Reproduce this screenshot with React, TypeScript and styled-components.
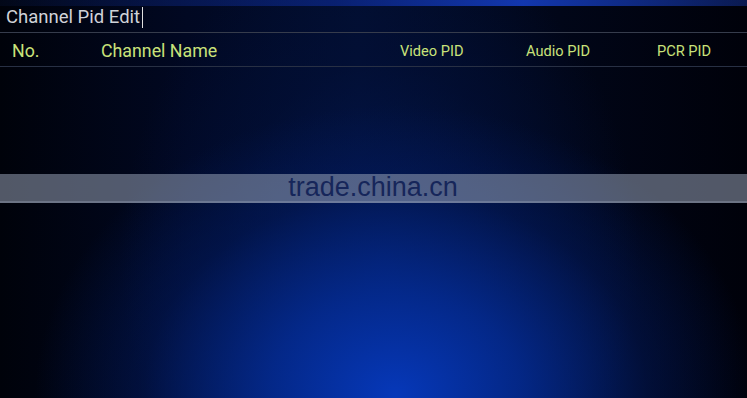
import * as React from 'react';
import styled, { createGlobalStyle } from 'styled-components';

const GlobalStyle = createGlobalStyle`
  html, body {
    margin: 0;
    padding: 0;
    background: #01040c;
  }
  body {
    font-family: Roboto, "Noto Sans", "Liberation Sans", sans-serif;
  }
`;

const columns = [
  { label: 'No.', left: 12, big: true },
  { label: 'Channel Name', left: 101, big: true },
  { label: 'Video PID', left: 400, big: false },
  { label: 'Audio PID', left: 526, big: false },
  { label: 'PCR PID', left: 657, big: false },
];

export default function App() {
  return (
    <>
      <GlobalStyle />
      <Screen>
        <TopGlow />
        <TitleBar>
          <Title>Channel Pid Edit</Title>
          <Caret />
        </TitleBar>
        <HeaderRow>
          {columns.map((c, i) => (
            <HeaderCell
              key={c.label}
              $big={c.big}
              style={{ width: (columns[i + 1]?.left ?? 747) - c.left }}
            >
              {c.label}
            </HeaderCell>
          ))}
        </HeaderRow>
        <Body>
          <Watermark>trade.china.cn</Watermark>
        </Body>
      </Screen>
    </>
  );
}

const Screen = styled.div`
  width: 747px;
  height: 398px;
  overflow: hidden;
  position: relative;
  display: flex;
  flex-direction: column;
  background:
    radial-gradient(ellipse 360px 290px at 395px 395px, rgba(6, 56, 185, 1) 0%, rgba(4, 44, 150, 0.85) 35%, rgba(2, 26, 95, 0.5) 70%, rgba(1, 10, 35, 0) 100%),
    radial-gradient(ellipse 260px 330px at 380px 260px, rgba(3, 26, 90, 0.8) 0%, rgba(2, 16, 60, 0.5) 60%, rgba(1, 8, 30, 0) 100%),
    linear-gradient(to right, #00020a 0%, #010822 25%, #020e2e 48%, #010618 75%, #00010a 100%);
`;

const TopGlow = styled.div`
  position: absolute;
  top: 0;
  left: 0;
  right: 0;
  height: 6px;
  background: linear-gradient(to right, rgba(10, 30, 80, 0.2) 0%, rgba(12, 40, 140, 0.7) 45%, rgba(20, 60, 190, 0.9) 70%, rgba(20, 50, 150, 0.5) 100%);
`;

const TitleBar = styled.div`
  height: 33px;
  display: flex;
  align-items: center;
  padding-left: 6px;
  padding-top: 2px;
  box-sizing: border-box;
  border-bottom: 1px solid #363c4c;
`;

const Title = styled.span`
  font-size: 18.5px;
  color: #d0d2d8;
`;

const Caret = styled.span`
  width: 1px;
  height: 21px;
  margin-left: 2px;
  background: #e0e0e0;
`;

const HeaderRow = styled.div`
  height: 34px;
  display: flex;
  align-items: center;
  padding-left: 12px;
  padding-top: 2px;
  box-sizing: border-box;
  border-bottom: 1px solid #283044;
`;

const HeaderCell = styled.span<{ $big: boolean }>`
  flex-shrink: 0;
  font-size: ${({ $big }) => ($big ? '17.8px' : '14.6px')};
  color: #c9e27a;
  white-space: nowrap;
`;

const Body = styled.div`
  flex: 1;
  padding-top: 107px;
`;

const Watermark = styled.div`
  height: 27px;
  display: flex;
  align-items: center;
  justify-content: center;
  padding-right: 1px;
  background: rgba(150, 160, 180, 0.55);
  border-bottom: 2px solid rgba(170, 180, 200, 0.3);
  font-family: "Liberation Sans", Arial, sans-serif;
  font-size: 27px;
  color: #16265a;
`;
